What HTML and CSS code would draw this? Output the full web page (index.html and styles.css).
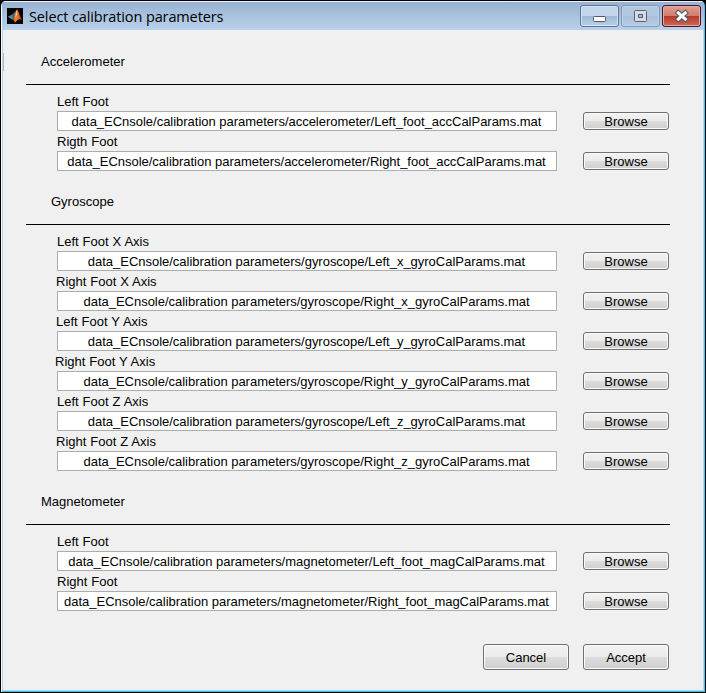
FILE: index.html
```
<!DOCTYPE html>
<html lang="en">
<head>
<meta charset="utf-8">
<title>Select calibration parameters</title>
<link rel="stylesheet" href="styles.css">
</head>
<body>
<div class="window">
  <header class="titlebar">
    <svg class="logo" width="16" height="16" viewBox="0 0 16 16">
      <defs><linearGradient id="flame" x1="0" x2="1"><stop offset="0" stop-color="#8c2413"/><stop offset=".4" stop-color="#f08a38"/><stop offset=".65" stop-color="#e06425"/><stop offset="1" stop-color="#a52d12"/></linearGradient></defs>
      <rect width="16" height="16" fill="#050303"/>
      <path d="M.8 8.8L5 6.6L7 5L8 8L5 11.6L3.5 10.4z" fill="#3f8fae"/>
      <path d="M5 6.8L8.8 2.4L8 8L6 10z" fill="#346075"/>
      <path d="M10 1.2C11.6 3 12.7 8.5 15.4 12.4C12.8 10.6 11 10.6 8 14.8C7.2 12.4 6.4 11.6 4.6 11.6C7.4 9.5 8.4 3 10 1.2z" fill="url(#flame)"/>
      <path d="M9.9 2L10.2 6L8.4 10L8.8 6z" fill="#ffd184"/>
    </svg>
    <h1 class="title">Select calibration parameters</h1>
    <div class="controls">
      <span class="control"><svg width="37" height="20" viewBox="0 0 37 20"><rect x="12.5" y="10.5" width="12" height="5" rx="1" fill="#fff" stroke="#535666"/></svg></span>
      <span class="control control-disabled"><svg width="37" height="20" viewBox="0 0 37 20"><rect x="12.5" y="4.5" width="12" height="11" rx="1" fill="#dadbe0" stroke="#5d606c"/><rect x="16.5" y="8.5" width="4" height="3" fill="#9fb9d6" stroke="#5d606c"/></svg></span>
      <span class="control control-close"><svg width="37" height="20" viewBox="0 0 37 20"><path d="M15.3 6.8L22.3 13.2M22.3 6.8L15.3 13.2" stroke="#535666" stroke-width="5" stroke-linecap="square"/><path d="M15.3 6.8L22.3 13.2M22.3 6.8L15.3 13.2" stroke="#fff" stroke-width="3" stroke-linecap="square"/></svg></span>
    </div>
  </header>
  <main class="content">
    <section class="group">
      <h2 class="heading">Accelerometer</h2>
      <div class="field"><label>Left Foot</label><div class="path"><span>data_ECnsole/calibration parameters/accelerometer/Left_foot_accCalParams.mat</span></div><button>Browse</button></div>
      <div class="field"><label>Rigth Foot</label><div class="path"><span>data_ECnsole/calibration parameters/accelerometer/Right_foot_accCalParams.mat</span></div><button>Browse</button></div>
    </section>
    <section class="group">
      <h2 class="heading heading-inset">Gyroscope</h2>
      <div class="field"><label>Left Foot X Axis</label><div class="path"><span>data_ECnsole/calibration parameters/gyroscope/Left_x_gyroCalParams.mat</span></div><button>Browse</button></div>
      <div class="field"><label class="out-1">Right Foot X Axis</label><div class="path"><span>data_ECnsole/calibration parameters/gyroscope/Right_x_gyroCalParams.mat</span></div><button>Browse</button></div>
      <div class="field"><label class="out-1">Left Foot Y Axis</label><div class="path"><span>data_ECnsole/calibration parameters/gyroscope/Left_y_gyroCalParams.mat</span></div><button>Browse</button></div>
      <div class="field"><label class="out-2">Right Foot Y Axis</label><div class="path"><span>data_ECnsole/calibration parameters/gyroscope/Right_y_gyroCalParams.mat</span></div><button>Browse</button></div>
      <div class="field"><label>Left Foot Z Axis</label><div class="path"><span>data_ECnsole/calibration parameters/gyroscope/Left_z_gyroCalParams.mat</span></div><button>Browse</button></div>
      <div class="field"><label class="out-1">Right Foot Z Axis</label><div class="path"><span>data_ECnsole/calibration parameters/gyroscope/Right_z_gyroCalParams.mat</span></div><button>Browse</button></div>
    </section>
    <section class="group">
      <h2 class="heading">Magnetometer</h2>
      <div class="field"><label>Left Foot</label><div class="path"><span>data_ECnsole/calibration parameters/magnetometer/Left_foot_magCalParams.mat</span></div><button>Browse</button></div>
      <div class="field"><label>Right Foot</label><div class="path"><span>data_ECnsole/calibration parameters/magnetometer/Right_foot_magCalParams.mat</span></div><button>Browse</button></div>
    </section>
    <footer class="actions"><button>Cancel</button><button>Accept</button></footer>
  </main>
</div>
</body>
</html>
```
FILE: styles.css
```
* { box-sizing: border-box; }
body {
  margin: 0;
  background: #000;
  font: 13px/20px "Liberation Sans", Arial, sans-serif;
  color: #000;
}
.window {
  width: 706px;
  height: 693px;
  border: 1px solid #000;
  border-radius: 6px 6px 0 0;
  overflow: hidden;
  background: #b9d1ea;
  box-shadow: inset 1px 1px #fff, inset -1px -1px #35c5ea;
}
.titlebar {
  display: flex;
  align-items: flex-start;
  height: 29px;
  margin: 0 1px;
  padding-left: 5px;
  border-top: 1px solid #e9f2fb;
  background: linear-gradient(#98b3d2, #b9d1ea);
}
.logo { margin-top: 6px; }
.title {
  margin: 5px 0 0 6px;
  font: 14.5px/20px "Open Sans", "Noto Sans", sans-serif;
  letter-spacing: -0.12px;
}
.controls {
  display: flex;
  gap: 2px;
  margin: 3px 3px 0 auto;
}
.control {
  width: 39px;
  height: 22px;
  border: 1px solid #62738f;
  border-radius: 3px;
  background: linear-gradient(#c3d5ea 0 50%, #9db8d5 50%, #b8d0e9);
  box-shadow: inset 0 0 0 1px #d5e4f3;
}
.control svg { display: block; }
.control-disabled { border-color: #8299b6; background: linear-gradient(#b1c8e1 0 50%, #a6bfdb 50%, #b6cde7); box-shadow: inset 0 0 0 1px #bed1e7; }
.control-close {
  border-color: #4b1420;
  background: linear-gradient(#dfa095, #cf7b6b 50%, #b5382a 50%, #ca6954);
  box-shadow: inset 0 0 0 1px #e2aaa0;
}
.content {
  height: 660px;
  margin: 0 2px;
  padding: 11px 33px 0 23px;
  background: linear-gradient(#b9bac4, #b9bac4) 0 23px / 1px 18px no-repeat #f0f0f0;
}
.group { padding-bottom: 10px; }
.heading {
  height: 44px;
  margin: 0 0 6px;
  padding: 11px 0 0 15px;
  border-bottom: 1px solid #000;
  font: inherit;
  line-height: 20px;
}
.heading-inset { padding-left: 25px; }
.field {
  display: grid;
  grid-template-columns: 500px 86px;
  grid-template-rows: 20px 20px;
  column-gap: 26px;
  align-items: center;
  margin-left: 31px;
}
label {
  grid-column: 1 / -1;
  padding-top: 2px;
  word-spacing: 0.3px;
}
.out-1 { margin-left: -1px; }
.out-2 { margin-left: -2px; }
.path {
  height: 20px;
  padding-right: 1px;
  border: 1px solid #abadb3;
  background: #fff;
  line-height: 19px;
  letter-spacing: -0.018px;
  text-align: center;
  white-space: nowrap;
}
button {
  width: 86px;
  height: 18px;
  padding: 2px 0 0;
  border: 1px solid #707070;
  border-radius: 3px;
  background: linear-gradient(#f2f2f2, #ebebeb 50%, #dddddd 50%, #cfcfcf);
  box-shadow: inset 0 0 0 1px #f9f9f9;
  font: inherit;
  line-height: 14px;
  color: #000;
}
.actions {
  display: flex;
  justify-content: flex-end;
  gap: 14px;
  margin-top: 23px;
  padding-right: 1px;
}
.actions button { height: 26px; line-height: 22px; }
```
